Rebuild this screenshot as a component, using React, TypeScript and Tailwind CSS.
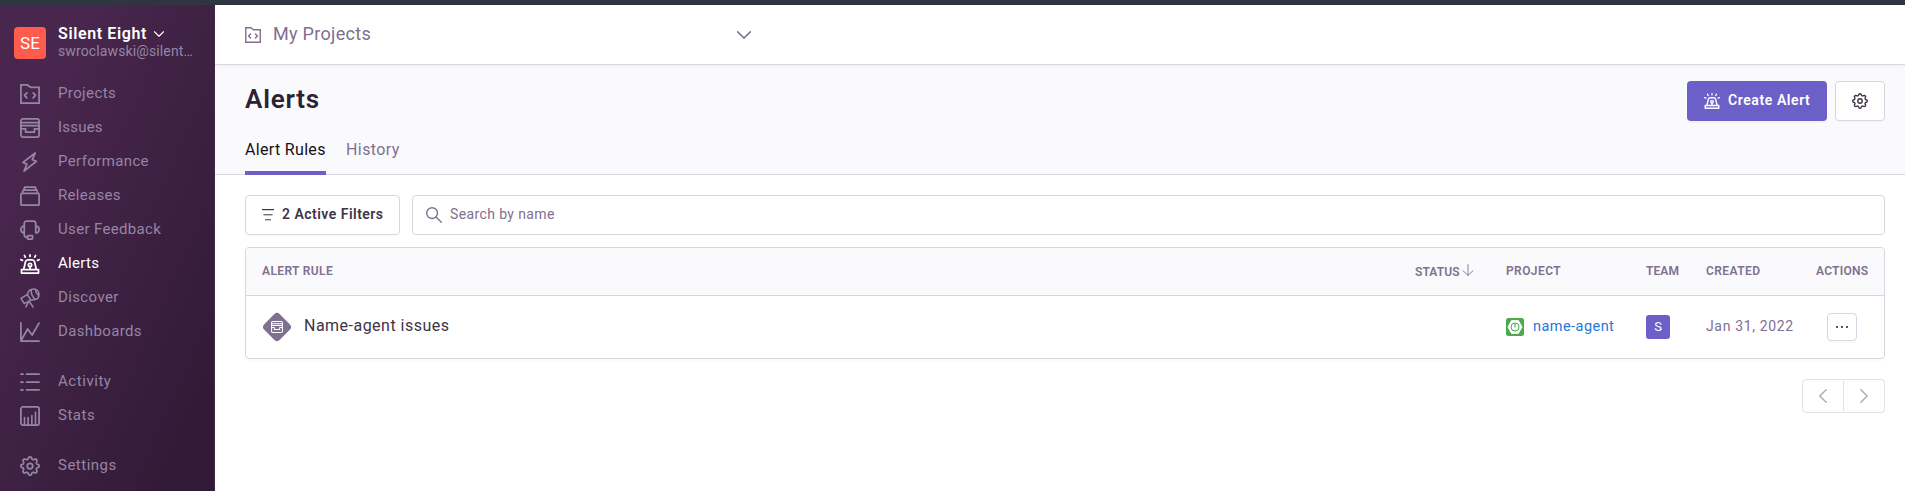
import type { ReactNode } from 'react';

type IconProps = { size?: number; className?: string };

function Svg({ size = 20, className = '', children }: IconProps & { children: ReactNode }) {
  return (
    <svg
      width={size}
      height={size}
      viewBox="0 0 16 16"
      fill="none"
      stroke="currentColor"
      strokeWidth="1.4"
      strokeLinecap="round"
      strokeLinejoin="round"
      className={`block shrink-0 ${className}`}
    >
      {children}
    </svg>
  );
}

const IconProject = (p: IconProps) => (
  <Svg {...p}>
    <path d="M.75 15.25V.75h5.2l2.6 2h6.7v12.5z" strokeLinejoin="miter" />
    <path d="M5.5 7.1 3.6 9.1l1.9 2M10.5 7.1l1.9 2-1.9 2" />
  </Svg>
);

const IconIssues = (p: IconProps) => (
  <Svg {...p}>
    <rect x=".75" y=".75" width="14.5" height="14.5" rx="1.6" />
    <path d="M.75 3.6h14.5M.75 6h14.5M.75 8.6h3.7v2.6h7.1V8.6h3.7" />
  </Svg>
);

const IconLightning = (p: IconProps) => (
  <Svg {...p}>
    <path d="M12.2.8 2.4 8.3l3.1 1.4-2.2 5.6 9.8-7.9-3.3-1.3z" />
  </Svg>
);

const IconReleases = (p: IconProps) => (
  <Svg {...p}>
    <rect x=".75" y="5.9" width="14.5" height="9.4" rx=".8" />
    <path d="M1.9 5.7 2.5 3.3h11l.6 2.4M3.2 3.2 3.7.8h8.6l.5 2.4" />
  </Svg>
);

const IconSupport = (p: IconProps) => (
  <Svg {...p}>
    <path d="M3.4 10.2V2.8a2 2 0 0 1 2-2h5.2a2 2 0 0 1 2 2v7.4M3.4 4.9C1.7 4.9.75 6 .75 7.5s.95 2.7 2.65 2.7M12.6 4.9c1.7 0 2.65 1.1 2.65 2.6s-.95 2.7-2.65 2.7M3.4 10.2v1.6a2 2 0 0 0 2 2h.5" />
    <rect x="6" y="12.4" width="4" height="2.8" rx=".4" />
  </Svg>
);

const IconSiren = (p: IconProps) => (
  <Svg {...p}>
    <path d="M1.2 15.25v-2.7h13.6v2.7zM2.9 12.5l1.5-6.3a2 2 0 0 1 1.9-1.5h3.4a2 2 0 0 1 1.9 1.5l1.5 6.3M8 10v2.4M8 .7v1.2M3.6 1.2l.6 1.3M12.4 1.2l-.6 1.3M.7 4.6l1.3.5M15.3 4.6l-1.3.5" />
    <circle cx="8" cy="8.7" r="1.3" />
  </Svg>
);

const IconTelescope = (p: IconProps) => (
  <Svg {...p} className="[stroke-width:1.25]">
    <path d="M.8 8.3 5.9 5.2l2.7 4.5-5.2 2.8zM6 5.1C6.4 2.6 8.4.8 10.8.8c2.5 0 4.4 1.8 4.4 4.3 0 2.4-1.7 4.1-4.2 4.3l-2.3.2M9 1.3c-.3 2.8 1.2 6 3.4 7.8M6.9 10.9l-2.2 4.3M7.6 10.9l2.8 4.3M12.2 1c.2 1.9 1.2 3.7 2.8 5.2" />
  </Svg>
);

const IconGraph = (p: IconProps) => (
  <Svg {...p}>
    <path d="M.75.75v14.5h14.5M1.1 14.4l5-8.8 3.6 4.8L15.2.9" />
  </Svg>
);

const IconActivity = (p: IconProps) => (
  <Svg {...p}>
    <path d="M.75 1.7h1.6M5.3 1.7h9.95M.75 8h1.6M5.3 8h9.95M.75 14.3h1.6M5.3 14.3h9.95" />
  </Svg>
);

const IconStats = (p: IconProps) => (
  <Svg {...p}>
    <rect x=".75" y=".75" width="14.5" height="14.5" rx="1.6" />
    <path d="M3.6 9.3v5.4M6.5 9.3v5.4M9.5 7.6v7.1M12.4 4.8v9.9" strokeWidth="1.3" />
  </Svg>
);

const gearOutline =
  Array.from({ length: 96 }, (_, i) => {
    const angle = (i / 96) * Math.PI * 2;
    const wave = Math.cos(8 * angle);
    const radius = 6.45 + 0.85 * Math.sign(wave) * Math.sqrt(Math.abs(wave));
    const x = 8 + radius * Math.sin(angle);
    const y = 8 - radius * Math.cos(angle);
    return `${i ? 'L' : 'M'}${x.toFixed(2)} ${y.toFixed(2)}`;
  }).join('') + 'Z';

const IconSettings = (p: IconProps) => (
  <Svg {...p}>
    <path d={gearOutline} />
    <circle cx="8" cy="8" r="2.2" />
  </Svg>
);

type ChevronProps = IconProps & { direction: 'down' | 'left' | 'right' };

function IconChevron({ direction, ...p }: ChevronProps) {
  const paths = {
    down: 'M.8 4.4 8 11.6l7.2-7.2',
    left: 'M11.6.8 4.4 8l7.2 7.2',
    right: 'M4.4.8 11.6 8l-7.2 7.2',
  };
  return (
    <Svg {...p}>
      <path d={paths[direction]} strokeWidth="1.7" />
    </Svg>
  );
}

type NavItem = { label: string; icon: (p: IconProps) => ReactNode; track: string; active?: boolean };

const navGroups: NavItem[][] = [
  [
    { label: 'Projects', icon: IconProject, track: 'tracking-[0.38px]' },
    { label: 'Issues', icon: IconIssues, track: 'tracking-[0.2px]' },
    { label: 'Performance', icon: IconLightning, track: 'tracking-[0.38px]' },
    { label: 'Releases', icon: IconReleases, track: 'tracking-[0.3px]' },
    { label: 'User Feedback', icon: IconSupport, track: 'tracking-[0.34px]' },
    { label: 'Alerts', icon: IconSiren, track: 'tracking-[0.3px]', active: true },
    { label: 'Discover', icon: IconTelescope, track: 'tracking-[0.38px]' },
    { label: 'Dashboards', icon: IconGraph, track: 'tracking-[0.36px]' },
  ],
  [
    { label: 'Activity', icon: IconActivity, track: 'tracking-[0.55px]' },
    { label: 'Stats', icon: IconStats, track: 'tracking-[0.5px]' },
  ],
  [{ label: 'Settings', icon: IconSettings, track: 'tracking-[0.5px]' }],
];

function Sidebar() {
  return (
    <aside className="w-[215px] shrink-0 border-r border-[#42264c] bg-[linear-gradient(294.17deg,#311a36_8%,#48264d_78%)]">
      <div className="flex h-[72px] gap-3 pt-5 pl-[14px]">
        <div className="mt-0.5 flex size-8 items-center justify-center rounded bg-[#ff5c4d] text-[17px] leading-none text-white">
          SE
        </div>
        <div>
          <div className="flex h-[18px] items-center gap-[7px] text-base leading-[18px] font-semibold text-white">
            <span className="tracking-[0.62px]">Silent Eight</span>
            <IconChevron direction="down" size={10} />
          </div>
          <div className="h-4 text-sm leading-4 tracking-[0.12px] whitespace-nowrap text-[#9586a5]">
            swroclawski@silent…
          </div>
        </div>
      </div>
      <nav className="flex flex-col gap-4">
        {navGroups.map((group, i) => (
          <ul key={i}>
            {group.map(({ label, icon: Icon, track, active }) => (
              <li
                key={label}
                className={`flex h-[34px] items-center gap-[18px] pl-5 text-[15px] ${active ? 'text-white' : 'text-[#9586a5]'}`}
              >
                <Icon size={20} />
                <span className={`pb-0.5 leading-5 whitespace-nowrap ${track}`}>{label}</span>
              </li>
            ))}
          </ul>
        ))}
      </nav>
    </aside>
  );
}

function PageHeader() {
  return (
    <header className="flex h-[110px] flex-col justify-between border-b border-[#dad4e0] bg-[#fafafc] pr-5 pl-[30px]">
      <div className="flex items-start justify-between pt-4">
        <h1 className="text-[26px] leading-9 font-semibold tracking-[0.8px] text-[#2b2233]">Alerts</h1>
        <div className="flex gap-2">
          <button className="flex h-10 w-[140px] items-center gap-2 rounded bg-[#6c5fc7] pl-[17px] text-sm font-semibold text-white shadow-[0_2px_1px_rgba(0,0,0,0.03)]">
            <IconSiren size={16} />
            <span className="pb-0.5 tracking-[0.58px]">Create Alert</span>
          </button>
          <button className="flex h-10 w-[50px] items-center justify-center rounded border border-[#dad4e0] bg-white text-[#3e3446] shadow-[0_2px_1px_rgba(0,0,0,0.02)]">
            <IconSettings size={16} />
          </button>
        </div>
      </div>
      <div className="-mb-px flex gap-5 text-base leading-[26px]">
        <div className="h-[38px] w-[81px] border-b-4 border-[#6c5fc7] tracking-[0.33px] whitespace-nowrap text-[#161019]">
          Alert Rules
        </div>
        <div className="tracking-[0.42px] text-[#80708f]">History</div>
      </div>
    </header>
  );
}

function Filters() {
  return (
    <div className="flex gap-3">
      <button className="flex h-10 w-[155px] items-center gap-2 rounded border border-[#dad4e0] pl-4 text-sm font-semibold text-[#3e3446] shadow-[0_2px_1px_rgba(0,0,0,0.02)]">
        <svg width="12" height="12" viewBox="0 0 12 12" fill="currentColor" className="block">
          <rect width="12" height="1.2" />
          <rect x="1.5" y="5" width="9" height="1.4" opacity=".7" />
          <rect x="3" y="10" width="6" height="1.4" opacity=".7" />
        </svg>
        <span className="pb-0.5 tracking-[0.48px] whitespace-nowrap">2 Active Filters</span>
      </button>
      <div className="flex h-10 flex-1 items-center gap-2 rounded border border-[#dad4e0] pl-[13px] text-sm text-[#80708f]">
        <Svg size={16}>
          <circle cx="6.1" cy="6.1" r="5.4" />
          <path d="m10 10 5.3 5.3" />
        </Svg>
        <span className="pb-0.5 tracking-[0.38px]">Search by name</span>
      </div>
    </div>
  );
}

const tableColumns = 'grid grid-cols-[1fr_91px_140px_60px_110px_53px] items-center pl-4 pr-[15px]';

function AlertTable() {
  return (
    <div className="mt-3 overflow-hidden rounded border border-[#dad4e0] shadow-[0_2px_1px_rgba(0,0,0,0.02)]">
      <div
        className={`${tableColumns} h-12 border-b border-[#dad4e0] bg-[#fafafc] text-xs font-semibold text-[#80708f] uppercase`}
      >
        <span className="pb-px tracking-[0.38px]">Alert Rule</span>
        <span className="flex items-center gap-0.5 pt-px tracking-[0.12px]">
          Status
          <Svg size={12} className="-mt-1">
            <path d="M8 .8v14.4M1.4 9 8 15.2 14.6 9" strokeWidth="1.2" />
          </Svg>
        </span>
        <span className="pb-px tracking-[0.42px]">Project</span>
        <span className="pb-px tracking-[0.1px]">Team</span>
        <span className="pb-px tracking-[0.42px]">Created</span>
        <span className="pb-px tracking-[0.25px]">Actions</span>
      </div>
      <div className={`${tableColumns} h-[62px] text-sm`}>
        <div className="flex items-center gap-3 text-base text-[#3e3446]">
          <div className="flex size-[30px] items-center justify-center">
            <div className="flex size-[22px] rotate-45 items-center justify-center rounded bg-[#80708f] text-white">
              <IconIssues size={12} className="-rotate-45" />
            </div>
          </div>
          <span className="pb-0.5 tracking-[0.48px]">Name-agent issues</span>
        </div>
        <span />
        <div className="flex items-center gap-[9px] text-[#2577d9]">
          <svg width="18" height="18" viewBox="0 0 18 18" className="block">
            <rect width="18" height="18" rx="2.5" fill="#4caa4c" />
            <path d="M5.6 2.6h6.8L16 9l-3.6 6.4H5.6L2 9z" fill="#fff" stroke="#fff" strokeLinejoin="round" />
            <circle cx="9" cy="9" r="4" fill="none" stroke="#4caa4c" />
            <path d="M9 6v3.2" stroke="#4caa4c" strokeWidth="1.2" />
          </svg>
          <span className="text-[14.5px] leading-5 tracking-[0.45px]">name-agent</span>
        </div>
        <div className="flex size-6 items-center justify-center rounded-[3px] bg-[#6c5fc7] text-[13px] text-white">S</div>
        <span className="pb-0.5 tracking-[0.65px] text-[#80708f]">Jan 31, 2022</span>
        <button className="ml-[11px] flex h-7 w-[30px] items-center justify-center gap-[3px] rounded border border-[#dad4e0] shadow-[0_2px_1px_rgba(0,0,0,0.02)]">
          <i className="size-0.5 bg-[#5e5466]" />
          <i className="size-0.5 bg-[#5e5466]" />
          <i className="size-0.5 bg-[#5e5466]" />
        </button>
      </div>
    </div>
  );
}

function Pagination() {
  return (
    <div className="mt-5 flex justify-end text-[#b3a9bc]">
      <button className="flex h-[34px] w-[42px] items-center justify-center rounded-l border border-[#e6e2ea]">
        <IconChevron direction="left" size={14} />
      </button>
      <button className="flex h-[34px] w-[41px] items-center justify-center rounded-r border border-l-0 border-[#e6e2ea]">
        <IconChevron direction="right" size={14} />
      </button>
    </div>
  );
}

export default function App() {
  return (
    <div className="flex h-[491px] flex-col overflow-hidden bg-white font-[Roboto,sans-serif]">
      <div className="h-[5px] shrink-0 bg-[#2f3541]" />
      <div className="flex min-h-0 flex-1">
        <Sidebar />
        <main className="min-w-0 flex-1">
          <div className="relative flex h-[60px] items-center border-b border-[#dad4e0] bg-white pl-[30px] text-[#80708f] shadow-[0_2px_4px_rgba(43,34,51,0.04)]">
            <div className="flex w-[506px] items-center justify-between">
              <div className="flex items-center gap-3">
                <IconProject size={16} />
                <span className="pb-0.5 text-lg leading-6 tracking-[0.3px]">My Projects</span>
              </div>
              <IconChevron direction="down" size={14} />
            </div>
          </div>
          <PageHeader />
          <section className="pt-5 pr-5 pl-[30px]">
            <Filters />
            <AlertTable />
            <Pagination />
          </section>
        </main>
      </div>
    </div>
  );
}
